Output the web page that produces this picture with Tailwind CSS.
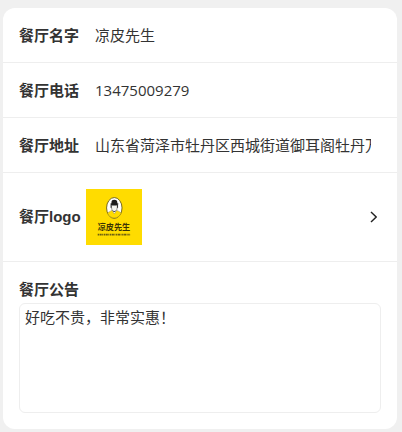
<!DOCTYPE html>
<html lang="zh-CN">
<head>
  <meta charset="UTF-8" />
  <meta name="viewport" content="width=device-width, initial-scale=1" />
  <title>餐厅信息</title>
  <script src="https://cdn.jsdelivr.net/npm/@tailwindcss/browser@4"></script>
</head>
<body class="min-h-screen bg-[#f0f0f0] pt-2 pr-[5px] pb-[3px] pl-[3px] text-[15px] leading-[22px] text-[#333] [font-family:'Open_Sans','Noto_Sans_CJK_SC',sans-serif]">
  <form class="rounded-xl bg-white">
    <!-- basic info -->
    <div class="flex items-center gap-4 border-b border-[#eee] py-4 pl-4 pr-[26px]">
      <label for="name" class="shrink-0 font-bold">餐厅名字</label>
      <input id="name" type="text" value="凉皮先生" class="h-[22px] min-w-0 flex-1 outline-none" />
    </div>
    <div class="flex items-center gap-4 border-b border-[#eee] py-4 pl-4 pr-[26px]">
      <label for="phone" class="shrink-0 font-bold">餐厅电话</label>
      <input id="phone" type="tel" value="13475009279" class="h-[22px] min-w-0 flex-1 outline-none" />
    </div>
    <div class="flex items-center gap-4 border-b border-[#eee] py-4 pl-4 pr-[26px]">
      <label for="address" class="shrink-0 font-bold">餐厅地址</label>
      <input id="address" type="text" value="山东省菏泽市牡丹区西城街道御耳阁牡丹万" class="h-[22px] min-w-0 flex-1 outline-none" />
    </div>

    <!-- logo -->
    <button type="button" class="flex w-full items-center border-b border-[#eee] py-4 pl-4 pr-5 text-left">
      <span class="mr-[5px] font-bold [font-family:'Liberation_Sans','Noto_Sans_CJK_SC',sans-serif]">餐厅logo</span>
      <svg class="size-14" viewBox="0 0 55 55" role="img" aria-label="凉皮先生">
        <rect width="55" height="55" fill="#ffdc00" />
        <ellipse cx="27.8" cy="18.6" rx="7.6" ry="10.2" fill="#fff" stroke="#6b5d12" stroke-width="0.9" />
        <path d="M21 23.5 Q24.5 21.5 25.5 21 L27.8 24.5 L30.2 21 Q33 22 34.6 23.5 Q32.5 28.4 27.8 28.4 Q23 28.4 21 23.5Z" fill="#ffdc00" stroke="#8a7810" stroke-width="0.4" />
        <path d="M25 16 Q24.7 21.8 27.8 22.2 Q31 21.8 30.8 16Z" fill="#f4f4f0" stroke="#555" stroke-width="0.6" />
        <path d="M25 14 Q24.6 10.6 27.8 10.6 Q31 10.6 30.8 14 L32 14.5 Q31.5 16 27.8 16 Q24 16 23.8 14.5Z" fill="#1c1c1c" />
        <path d="M24.6 15.5 V18.5 M31 15.5 V18.5" stroke="#222" stroke-width="0.9" />
        <path d="M26.8 21.5 L27.8 22.6 L28.8 21.5" fill="none" stroke="#222" stroke-width="0.7" />
        <text x="27.5" y="40.5" text-anchor="middle" class="text-[8px] font-bold" fill="#3a3205">凉皮先生</text>
        <path d="M11.5 44.8 H43.5" stroke="#6b5d10" stroke-width="1.5" stroke-dasharray="1.4 0.5 2 0.5 1 0.6" />
      </svg>
      <svg class="ml-auto h-3 w-2" viewBox="0 0 8 12" fill="none" stroke="#222" stroke-width="1.4" aria-hidden="true">
        <path d="M2 1 L7.2 6 L2 11" />
      </svg>
    </button>

    <!-- notice -->
    <div class="p-4">
      <label for="notice" class="mb-[3px] block font-bold">餐厅公告</label>
      <textarea id="notice" class="block h-[110px] w-full resize-none rounded-md border border-[#eee] px-[5px] py-0.5 outline-none">好吃不贵，非常实惠！</textarea>
    </div>
  </form>
</body>
</html>
